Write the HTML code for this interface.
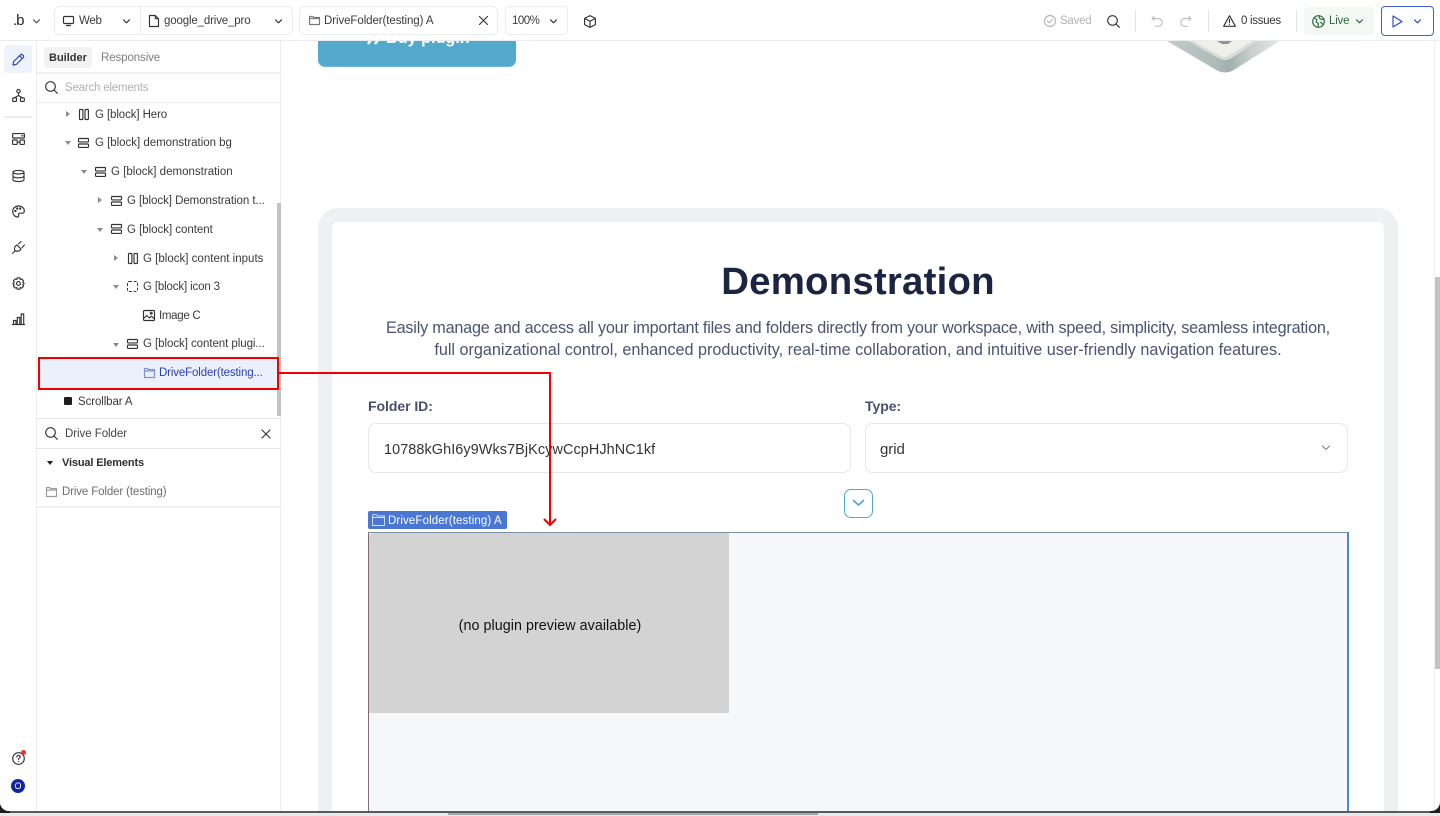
<!DOCTYPE html>
<html lang="en">
<head>
<meta charset="utf-8">
<title>Builder</title>
<style>
html,body{margin:0;padding:0;width:1440px;height:816px;overflow:hidden;background:#e9e9e9;}
*{box-sizing:border-box;}
#win{position:absolute;left:0;top:0;width:1440px;height:811px;background:#fff;border-radius:0 0 9px 9px;overflow:hidden;font-family:"Liberation Sans",sans-serif;color:#2b2b2b;}
.a{position:absolute;}
.t{position:absolute;white-space:nowrap;font-size:11.5px;line-height:16px;color:#3a3a3a;letter-spacing:-.05px;}
.box{position:absolute;background:#fff;border:1px solid #ececee;border-radius:5px;}
svg{position:absolute;overflow:visible;fill:none;stroke:#333;stroke-width:1.15;stroke-linecap:round;stroke-linejoin:round;}
.tri-r{position:absolute;width:0;height:0;border-left:4px solid #8a8a8a;border-top:3.5px solid transparent;border-bottom:3.5px solid transparent;}
.tri-d{position:absolute;width:0;height:0;border-top:4px solid #8a8a8a;border-left:3.5px solid transparent;border-right:3.5px solid transparent;}
</style>
</head>
<body>
<div class="a" style="left:0;top:811px;width:1440px;height:2px;background:#5a5a5a;"></div>
<div class="a" style="left:0;top:800px;width:10px;height:13px;background:#1e1e1e;"></div>
<div class="a" style="left:1430px;top:800px;width:10px;height:13px;background:#1e1e1e;"></div>
<div class="a" style="left:448px;top:813px;width:370px;height:2px;background:#a5a5a5;"></div>
<div id="win">

<!-- page content -->
<div class="a" style="left:318px;top:30px;width:198px;height:37px;background:#52a9cc;border-radius:0 0 7px 7px;border-bottom:1px solid #6cb9d8;"></div>
<svg style="left:366px;top:32px;stroke:#fff;stroke-width:2.6;stroke-linecap:butt" width="16" height="13" viewBox="0 0 16 13"><path d="M6 2L7 5 2 12M13 2L14 5 9 12"/></svg>
<div class="t" style="left:386px;top:29px;font-size:16.2px;line-height:18px;font-weight:bold;color:#fff;letter-spacing:0;">Buy plugin</div>

<svg style="left:1160px;top:41px;stroke:none" width="130" height="34" viewBox="0 0 130 34">
<defs>
<linearGradient id="g" x1="0" x2="1"><stop offset="0" stop-color="#c2cdcb"/><stop offset=".42" stop-color="#aebbb9"/><stop offset=".55" stop-color="#9fb0ae"/><stop offset=".75" stop-color="#c9d0ce"/><stop offset="1" stop-color="#e6e8e6"/></linearGradient>
</defs>
<path d="M7 0L58 30Q65 33 72 30L120 0Z" fill="url(#g)"/>
<path d="M28 0L60 18Q65 20 70 18L98 0Z" fill="#d9dcd6"/>
<path d="M33 0L60 15Q64 17 68 15L93 0Z" fill="#f0f0eb"/>
<path d="M57 0L62 3H68L72 0Z" fill="#8e9796"/>
</svg>

<!-- demonstration card -->
<div class="a" style="left:318px;top:208px;width:1080px;height:603px;background:#fff;border:14px solid #edf1f4;border-bottom:0;border-radius:20px 20px 0 0;"></div>
<div class="t" style="left:318px;top:259px;width:1080px;text-align:center;font-size:38.4px;line-height:46px;font-weight:bold;color:#1b2440;letter-spacing:.2px;">Demonstration</div>
<div class="t" style="left:338px;top:317px;width:1040px;text-align:center;font-size:16.2px;line-height:22px;color:#4a5472;letter-spacing:-.2px;">Easily manage and access all your important files and folders directly from your workspace, with speed, simplicity, seamless integration,</div>
<div class="t" style="left:338px;top:339px;width:1040px;text-align:center;font-size:16.2px;line-height:22px;color:#4a5472;letter-spacing:0;">full organizational control, enhanced productivity, real-time collaboration, and intuitive user-friendly navigation features.</div>

<div class="t" style="left:368px;top:397px;font-size:14px;line-height:18px;font-weight:bold;color:#46506e;">Folder ID:</div>
<div class="t" style="left:865px;top:397px;font-size:14px;line-height:18px;font-weight:bold;color:#46506e;">Type:</div>
<div class="a" style="left:368px;top:423px;width:483px;height:50px;border:1px solid #e4e7eb;border-radius:8px;background:#fff;"></div>
<div class="a" style="left:865px;top:423px;width:483px;height:50px;border:1px solid #e4e7eb;border-radius:8px;background:#fff;"></div>
<div class="t" style="left:384px;top:440px;font-size:14.4px;line-height:20px;color:#333;letter-spacing:.1px;">10788kGhI6y9Wks7BjKcywCcpHJhNC1kf</div>
<div class="t" style="left:880px;top:440px;font-size:15px;line-height:20px;color:#333;">grid</div>
<svg style="left:1322px;top:445px" width="8" height="6" viewBox="0 0 8 6"><path d="M.5 1L4 4.5 7.5 1" stroke="#888"/></svg>

<div class="a" style="left:844px;top:489px;width:29px;height:29px;border:1.6px solid #52a9cc;border-radius:7px;background:#fff;"></div>
<svg style="left:852px;top:499px" width="13" height="8" viewBox="0 0 13 8"><path d="M1.5 1.5L6.5 6 11.5 1.5" stroke="#46a3c8" stroke-width="1.6"/></svg>

<!-- selected element -->
<div class="a" style="left:368px;top:532px;width:981px;height:290px;background:#f6f7f9;border:1px solid #7f8fa8;border-right:2px solid #4a86d8;border-left:1px solid #806b70;"></div>
<div class="a" style="left:369px;top:533px;width:360px;height:180px;background:#d3d3d3;border-radius:4px 0 0 0;"></div>
<div class="t" style="left:369px;top:617px;width:362px;text-align:center;font-size:14.3px;line-height:18px;color:#111;letter-spacing:.05px;">(no plugin preview available)</div>
<div class="a" style="left:368px;top:511px;width:139px;height:18px;background:#4a76d4;border-radius:2px;"></div>
<svg style="left:372px;top:514px" width="13" height="12" viewBox="0 0 13 12"><path d="M.5 1.5Q.5 .7 1.3 .7H4.5L5.5 2H12.5V11.5H.5ZM.5 3.5H12.5" stroke="#d6e2fb" stroke-width=".9"/></svg>
<div class="t" style="left:388px;top:513px;font-size:11.5px;color:#fff;letter-spacing:.12px;">DriveFolder(testing) A</div>

<!-- right window scrollbar -->
<div class="a" style="left:1434px;top:40px;width:1px;height:771px;background:#f0f0f1;"></div>
<div class="a" style="left:1435px;top:277px;width:5px;height:392px;background:#c3c3c3;"></div>

<!-- left rail + panel -->
<div class="a" style="left:0;top:40px;width:37px;height:771px;background:#fff;border-right:1px solid #ececee;"></div>
<div class="a" style="left:37px;top:40px;width:244px;height:771px;background:#fff;border-right:1px solid #ececee;"></div>

<div class="a" style="left:4px;top:45px;width:28px;height:28px;background:#edf2fc;border-radius:3px;"></div>
<svg style="left:12px;top:53px;stroke:#2a3fa8" width="13" height="13" viewBox="0 0 13 13"><path d="M1 12L1.6 8.6 8.6 1.6Q9.4 .9 10.2 1.6L11.4 2.8Q12 3.6 11.4 4.4L4.4 11.4ZM7.6 2.8L10.2 5.4"/></svg>
<svg style="left:12px;top:89px" width="13" height="13" viewBox="0 0 13 13"><circle cx="6.5" cy="2.2" r="1.7"/><rect x=".7" y="8.8" width="3.8" height="3.6" rx=".8"/><rect x="8.5" y="8.8" width="3.8" height="3.6" rx=".8"/><path d="M6.5 4V6.5M2.6 8.8L6.5 6.5 10.4 8.8"/></svg>
<div class="a" style="left:4px;top:116px;width:28px;height:2px;background:#ececee;"></div>
<svg style="left:12px;top:133px" width="13" height="12" viewBox="0 0 13 12"><rect x=".6" y=".6" width="11.8" height="4.4" rx=".6"/><rect x=".6" y="7" width="4.6" height="4.4" rx=".6"/><rect x="8" y="7" width="4.4" height="4.4" rx=".6"/><path d="M5.2 9.2H8M9.6 2.8H11"/></svg>
<svg style="left:12px;top:170px" width="13" height="12" viewBox="0 0 13 12"><ellipse cx="6.5" cy="2.2" rx="5.5" ry="1.8"/><path d="M1 2.2V9.8C1 10.8 3.5 11.6 6.5 11.6S12 10.8 12 9.8V2.2M1 6C1 7 3.5 7.8 6.5 7.8S12 7 12 6"/></svg>
<svg style="left:12px;top:205px" width="13" height="13" viewBox="0 0 13 13"><path d="M6.5 1C3 1 .7 3.4 .7 6.4S3 12 5.6 12C7 12 7 10.8 6.6 10 6.2 9 6.8 8.2 8 8.2H10.4C11.6 8.2 12.3 7.2 12.3 5.8 12.3 3 9.8 1 6.5 1Z"/><circle cx="3.4" cy="6" r=".6"/><circle cx="5.2" cy="3.6" r=".6"/><circle cx="8.2" cy="3.6" r=".6"/></svg>
<svg style="left:12px;top:241px" width="13" height="13" viewBox="0 0 13 13"><path d="M.6 12.4L3 10M5 4L9 8 8 9.2C6.8 10.4 4.6 10.6 3.2 9.6 2 8.4 2.4 6 3.6 5ZM6.4 3L9 .6M10 6.6L12.4 4"/></svg>
<svg style="left:12px;top:277px" width="13" height="13" viewBox="0 0 13 13"><path d="M5.2 .8H7.8L8.2 2.4 9.7 1.9 11.6 3.8 10.7 5.2 12.2 6.5 10.7 7.8 11.6 9.2 9.7 11.1 8.2 10.6 7.8 12.2H5.2L4.8 10.6 3.3 11.1 1.4 9.2 2.3 7.8 .8 6.5 2.3 5.2 1.4 3.8 3.3 1.9 4.8 2.4Z"/><circle cx="6.5" cy="6.5" r="1.9"/></svg>
<svg style="left:12px;top:313px" width="13" height="12" viewBox="0 0 13 12"><path d="M.5 11.5H12.5M1.5 11.5V7.5H4V11.5M5.3 11.5V4.5H7.8V11.5M9.2 11.5V1H11.7V11.5"/></svg>
<svg style="left:12px;top:752px" width="13" height="13" viewBox="0 0 13 13"><circle cx="6.5" cy="6.5" r="5.8"/><path d="M4.8 5C4.9 3.9 5.6 3.4 6.5 3.4 7.5 3.4 8.2 4 8.2 4.9 8.2 6.1 6.5 6.1 6.5 7.5M6.5 9.5V9.6"/></svg>
<div class="a" style="left:21px;top:750px;width:5px;height:5px;background:#f0302a;border-radius:50%;"></div>
<div class="a" style="left:11px;top:779px;width:14px;height:14px;background:#12279c;border-radius:50%;"></div>
<div class="t" style="left:11px;top:779px;width:14px;height:14px;text-align:center;font-size:9px;line-height:14px;color:#fff;">O</div>

<!-- Builder tabs -->
<div class="a" style="left:44px;top:47px;width:48px;height:21px;background:#f2f2f3;border-radius:3px;"></div>
<div class="t" style="left:49px;top:50px;font-weight:bold;font-size:11px;color:#333;letter-spacing:0;">Builder</div>
<div class="t" style="left:101px;top:50px;font-size:11.5px;color:#7c7c7c;letter-spacing:-.1px;">Responsive</div>
<div class="a" style="left:37px;top:72px;width:244px;height:2px;background:#f0f0f1;"></div>
<svg style="left:45px;top:81px" width="13" height="13" viewBox="0 0 13 13"><circle cx="5.5" cy="5.5" r="4.8"/><path d="M9 9L12.3 12.3"/></svg>
<div class="t" style="left:65px;top:80px;color:#b0b0b0;letter-spacing:-.2px;">Search elements</div>
<div class="a" style="left:37px;top:102px;width:244px;height:1px;background:#ececee;"></div>

<!-- tree -->
<div class="tri-r" style="left:66px;top:111px"></div>
<svg style="left:79px;top:109px" width="10" height="11" viewBox="0 0 10 11"><rect x=".5" y=".5" width="3.4" height="10" rx=".8"/><rect x="6" y=".5" width="3.4" height="10" rx=".8"/></svg>
<div class="t" style="left:95px;top:107px;letter-spacing:-.1px;">G [block] Hero</div>

<div class="tri-d" style="left:65px;top:141px"></div>
<svg style="left:78px;top:138px" width="11" height="10" viewBox="0 0 11 10"><rect x=".5" y=".5" width="10" height="3.4" rx=".8"/><rect x=".5" y="6" width="10" height="3.4" rx=".8"/></svg>
<div class="t" style="left:95px;top:135px;letter-spacing:-.02px;">G [block] demonstration bg</div>

<div class="tri-d" style="left:81px;top:170px"></div>
<svg style="left:95px;top:167px" width="11" height="10" viewBox="0 0 11 10"><rect x=".5" y=".5" width="10" height="3.4" rx=".8"/><rect x=".5" y="6" width="10" height="3.4" rx=".8"/></svg>
<div class="t" style="left:111px;top:164px;letter-spacing:.01px;">G [block] demonstration</div>

<div class="tri-r" style="left:98px;top:197px"></div>
<svg style="left:111px;top:196px" width="11" height="10" viewBox="0 0 11 10"><rect x=".5" y=".5" width="10" height="3.4" rx=".8"/><rect x=".5" y="6" width="10" height="3.4" rx=".8"/></svg>
<div class="t" style="left:127px;top:193px;">G [block] Demonstration t...</div>

<div class="tri-d" style="left:97px;top:228px"></div>
<svg style="left:111px;top:224px" width="11" height="10" viewBox="0 0 11 10"><rect x=".5" y=".5" width="10" height="3.4" rx=".8"/><rect x=".5" y="6" width="10" height="3.4" rx=".8"/></svg>
<div class="t" style="left:127px;top:222px;letter-spacing:-.03px;">G [block] content</div>

<div class="tri-r" style="left:114px;top:255px"></div>
<svg style="left:128px;top:253px" width="10" height="11" viewBox="0 0 10 11"><rect x=".5" y=".5" width="3.4" height="10" rx=".8"/><rect x="6" y=".5" width="3.4" height="10" rx=".8"/></svg>
<div class="t" style="left:143px;top:251px;letter-spacing:.01px;">G [block] content inputs</div>

<div class="tri-d" style="left:113px;top:285px"></div>
<div class="a" style="left:127px;top:281px;width:11px;height:11px;border:1px dashed #333;border-radius:2px;"></div>
<div class="t" style="left:143px;top:279px;letter-spacing:-.15px;">G [block] icon 3</div>

<svg style="left:143px;top:310px" width="12" height="11" viewBox="0 0 12 11"><rect x=".5" y=".5" width="11" height="10" rx="1"/><path d="M.5 8.5L3.8 5.5 6.5 8 8.5 6.2 11.5 9"/><circle cx="8.2" cy="3.2" r=".9"/></svg>
<div class="t" style="left:159px;top:308px;letter-spacing:-.3px;">Image C</div>

<div class="tri-d" style="left:113px;top:343px"></div>
<svg style="left:127px;top:339px" width="11" height="10" viewBox="0 0 11 10"><rect x=".5" y=".5" width="10" height="3.4" rx=".8"/><rect x=".5" y="6" width="10" height="3.4" rx=".8"/></svg>
<div class="t" style="left:143px;top:336px;letter-spacing:-.06px;">G [block] content plugi...</div>

<div class="a" style="left:39px;top:358px;width:239px;height:31px;background:#ebf1fc;"></div>
<svg style="left:144px;top:368px;stroke:#7f90cf" width="11" height="10" viewBox="0 0 11 10"><path d="M.5 1.2Q.5 .5 1.2 .5H3.8L4.6 1.6H10.5V9.5H.5ZM.5 3H10.5"/></svg>
<div class="t" style="left:159px;top:365px;color:#2b3fae;letter-spacing:-.14px;">DriveFolder(testing...</div>

<div class="a" style="left:64px;top:397px;width:8px;height:8px;background:#1f1f1f;border-radius:1px;"></div>
<div class="t" style="left:78px;top:394px;letter-spacing:-.1px;">Scrollbar A</div>

<div class="a" style="left:277px;top:203px;width:4px;height:213px;background:#c3c3c3;"></div>

<!-- red annotation -->
<div class="a" style="left:38px;top:357px;width:241px;height:33px;border:2px solid #f00000;"></div>
<svg style="left:279px;top:372px;stroke:#f00000;stroke-width:2;stroke-linecap:butt" width="280" height="156" viewBox="0 0 280 156"><path d="M0 1H271V153"/><path d="M265 147L271 153 277 147"/></svg>

<!-- search bottom -->
<div class="a" style="left:37px;top:418px;width:244px;height:1px;background:#e6e6e8;"></div>
<svg style="left:45px;top:427px" width="13" height="13" viewBox="0 0 13 13"><circle cx="5.5" cy="5.5" r="4.8"/><path d="M9 9L12.3 12.3"/></svg>
<div class="t" style="left:65px;top:426px;color:#444;letter-spacing:-.05px;">Drive Folder</div>
<svg style="left:261px;top:429px" width="10" height="10" viewBox="0 0 10 10"><path d="M1 1L9 9M9 1L1 9"/></svg>
<div class="a" style="left:37px;top:448px;width:244px;height:1px;background:#e6e6e8;"></div>
<div class="tri-d" style="left:47px;top:461px;border-top-color:#222;"></div>
<div class="t" style="left:62px;top:455px;font-weight:bold;font-size:11px;color:#2e2e2e;letter-spacing:-.15px;">Visual Elements</div>
<svg style="left:46px;top:487px;stroke:#9a9a9a" width="11" height="10" viewBox="0 0 11 10"><path d="M.5 1.2Q.5 .5 1.2 .5H3.8L4.6 1.6H10.5V9.5H.5ZM.5 3H10.5"/></svg>
<div class="t" style="left:62px;top:484px;color:#6d6d6d;letter-spacing:-.13px;">Drive Folder (testing)</div>
<div class="a" style="left:37px;top:506px;width:244px;height:2px;background:#efeff0;"></div>

<!-- top bar -->
<div class="a" style="left:0;top:0;width:1440px;height:41px;background:#fff;border-bottom:1px solid #ececee;"></div>
<div class="t" style="left:13px;top:12px;font-size:15px;line-height:18px;color:#222;letter-spacing:-1px;">.b</div>
<svg style="left:33px;top:19px" width="7" height="5" viewBox="0 0 7 5"><path d="M.5 .8L3.5 3.8 6.5 .8" stroke="#555"/></svg>

<div class="box" style="left:54px;top:6px;width:87px;height:29px;border-radius:5px 0 0 5px;"></div>
<div class="box" style="left:140px;top:6px;width:153px;height:29px;border-radius:0 5px 5px 0;"></div>
<svg style="left:63px;top:16px" width="11" height="10" viewBox="0 0 11 10"><rect x=".5" y=".5" width="10" height="7" rx="1"/><path d="M3.5 9.5H7.5"/></svg>
<div class="t" style="left:79px;top:13px;letter-spacing:-.3px;">Web</div>
<svg style="left:123px;top:19px" width="7" height="5" viewBox="0 0 7 5"><path d="M.5 .8L3.5 3.8 6.5 .8"/></svg>
<svg style="left:149px;top:15px" width="10" height="12" viewBox="0 0 10 12"><path d="M.5 .5H6.3L9.5 3.7V11.5H.5ZM6.3 .5V3.7H9.5"/></svg>
<div class="t" style="left:164px;top:13px;letter-spacing:-.15px;">google_drive_pro</div>
<svg style="left:275px;top:19px" width="7" height="5" viewBox="0 0 7 5"><path d="M.5 .8L3.5 3.8 6.5 .8"/></svg>

<div class="box" style="left:299px;top:6px;width:199px;height:29px;"></div>
<svg style="left:309px;top:16px;stroke:#777" width="11" height="9" viewBox="0 0 11 9"><path d="M.5 1Q.5 .5 1 .5H3.8L4.6 1.4H10.5V8.5H.5ZM.5 2.6H10.5"/></svg>
<div class="t" style="left:324px;top:13px;letter-spacing:-.08px;">DriveFolder(testing) A</div>
<svg style="left:479px;top:16px" width="9" height="9" viewBox="0 0 9 9"><path d="M.5 .5L8.5 8.5M8.5 .5L.5 8.5"/></svg>

<div class="box" style="left:505px;top:6px;width:63px;height:29px;"></div>
<div class="t" style="left:512px;top:13px;letter-spacing:-.5px;">100%</div>
<svg style="left:550px;top:19px" width="7" height="5" viewBox="0 0 7 5"><path d="M.5 .8L3.5 3.8 6.5 .8"/></svg>
<svg style="left:584px;top:15px" width="12" height="13" viewBox="0 0 12 13"><path d="M6 .6L11.4 3.4V9.6L6 12.4 .6 9.6V3.4ZM.6 3.4L6 6.2 11.4 3.4M6 6.2V12.4"/></svg>

<svg style="left:1044px;top:15px;stroke:#b4b4b4" width="12" height="12" viewBox="0 0 12 12"><circle cx="6" cy="6" r="5.5"/><path d="M3.5 6L5.3 7.8 8.6 4.4"/></svg>
<div class="t" style="left:1060px;top:13px;color:#b4b4b4;letter-spacing:-.25px;">Saved</div>
<svg style="left:1107px;top:15px" width="13" height="13" viewBox="0 0 13 13"><circle cx="5.5" cy="5.5" r="4.8"/><path d="M9 9L12.3 12.3"/></svg>
<div class="a" style="left:1135px;top:10px;width:1px;height:22px;background:#e4e4e6;"></div>
<svg style="left:1151px;top:15px;stroke:#bdbdbd" width="12" height="12" viewBox="0 0 12 12"><path d="M3 1.5L1 3.5 3.2 5.4M1 3.5H7C9.4 3.5 11.3 5.3 11.3 7.4S9.4 11.3 7 11.3H4.5"/></svg>
<svg style="left:1180px;top:15px;stroke:#bdbdbd" width="12" height="12" viewBox="0 0 12 12"><path d="M9 1.5L11 3.5 8.8 5.4M11 3.5H5C2.6 3.5 .7 5.3 .7 7.4S2.6 11.3 5 11.3H7.5"/></svg>
<div class="a" style="left:1208px;top:10px;width:1px;height:22px;background:#e4e4e6;"></div>
<svg style="left:1223px;top:15px" width="13" height="12" viewBox="0 0 13 12"><path d="M6.5 .7L12.4 11.3H.6ZM6.5 4.4V7.6M6.5 9.2V9.4"/></svg>
<div class="t" style="left:1241px;top:13px;color:#333;letter-spacing:-.3px;">0 issues</div>
<div class="a" style="left:1296px;top:10px;width:1px;height:22px;background:#e4e4e6;"></div>
<div class="a" style="left:1304px;top:7px;width:70px;height:28px;background:#f3f8f4;border-radius:4px;"></div>
<svg style="left:1312px;top:15px;stroke:#2f6b3a" width="13" height="13" viewBox="0 0 13 13"><circle cx="6.5" cy="6.5" r="5.8"/><path d="M2 2.8L4.8 4.6 4.2 7 6.4 8.4 6 12M7.6 .8L7.2 3 9.8 4.6 12.2 4.2M8.4 7.2L11.4 9.6"/></svg>
<div class="t" style="left:1329px;top:13px;color:#2f6b3a;letter-spacing:-.2px;">Live</div>
<svg style="left:1356px;top:19px;stroke:#2f6b3a" width="7" height="5" viewBox="0 0 7 5"><path d="M.5 .8L3.5 3.8 6.5 .8"/></svg>
<div class="a" style="left:1381px;top:6px;width:53px;height:30px;border:1px solid #3f5fdc;border-radius:4px;background:#fff;"></div>
<svg style="left:1392px;top:15px;stroke:#2f46c8" width="11" height="13" viewBox="0 0 11 13"><path d="M1 1L10 6.5 1 12Z"/></svg>
<svg style="left:1414px;top:19px;stroke:#2f46c8" width="7" height="5" viewBox="0 0 7 5"><path d="M.5 .8L3.5 3.8 6.5 .8"/></svg>

</div>
</body>
</html>
